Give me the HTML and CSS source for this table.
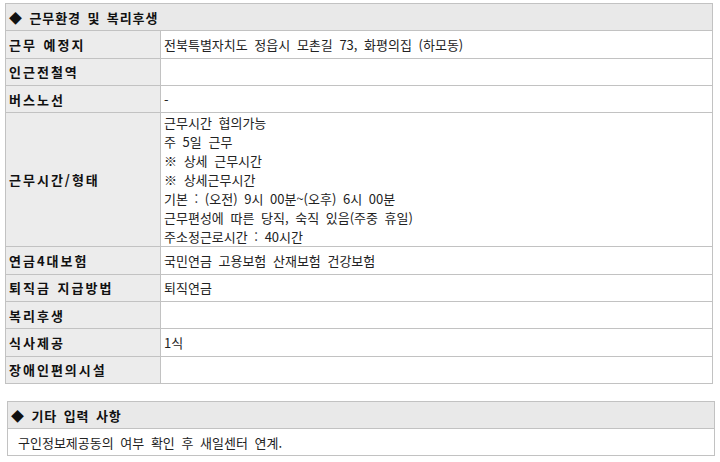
FILE: index.html
```html
<!DOCTYPE html>
<html lang="ko">
<head>
<meta charset="utf-8">
<link rel="stylesheet" href="styles.css">
</head>
<body>
<table class="info">
  <tr><th colspan="2" class="title">◆ 근무환경 및 복리후생</th></tr>
  <tr><td class="label">근무 예정지</td><td class="value">전북특별자치도 정읍시 모촌길 73, 화평의집 (하모동)</td></tr>
  <tr><td class="label">인근전철역</td><td class="value"></td></tr>
  <tr><td class="label">버스노선</td><td class="value">-</td></tr>
  <tr><td class="label">근무시간/형태</td><td class="value multi">근무시간 협의가능<br>주 5일 근무<br>※ 상세 근무시간<br>※ 상세근무시간<br>기본 : (오전) 9시 00분~(오후) 6시 00분<br>근무편성에 따른 당직, 숙직 있음(주중 휴일)<br>주소정근로시간 : 40시간</td></tr>
  <tr><td class="label">연금4대보험</td><td class="value">국민연금 고용보험 산재보험 건강보험</td></tr>
  <tr><td class="label">퇴직금 지급방법</td><td class="value">퇴직연금</td></tr>
  <tr><td class="label">복리후생</td><td class="value"></td></tr>
  <tr><td class="label">식사제공</td><td class="value">1식</td></tr>
  <tr><td class="label">장애인편의시설</td><td class="value"></td></tr>
</table>

<table class="info etc">
  <tr><th class="title">◆ 기타 입력 사항</th></tr>
  <tr><td class="note">구인정보제공동의 여부 확인 후 새일센터 연계.</td></tr>
</table>
</body>
</html>
```

FILE: styles.css
```css
html, body {
  margin: 0;
  padding: 0;
  background: #ffffff;
}
body {
  padding: 3px 0 0 5px;
  font-family: "Noto Sans CJK KR", "Noto Sans", sans-serif;
  font-size: 13px;
  color: #1a1a1a;
}
.info {
  border-collapse: collapse;
  width: 708px;
  border: 1px solid #c2c2c2;
}
.info td, .info th {
  border: 1px solid #c2c2c2;
  height: 26.33px;
  padding: 0 3px;
  line-height: 19px;
  vertical-align: middle;
  text-align: left;
}
.title {
  background: #e9e9e9;
  font-weight: bold;
  padding-left: 4px;
  color: #111;
  letter-spacing: 0.9px;
  word-spacing: 2px;
}
.label {
  width: 148px;
  background: #ececec;
  font-weight: bold;
  color: #111;
  letter-spacing: 2px;
  word-spacing: 1px;
}
.value {
  background: #fff;
  color: #222;
  word-spacing: 3px;
}
.etc {
  margin: 17px 0 0 2px;
}
.etc td.note {
  height: 26px;
  padding-left: 10px;
  color: #222;
  word-spacing: 3px;
}
```
